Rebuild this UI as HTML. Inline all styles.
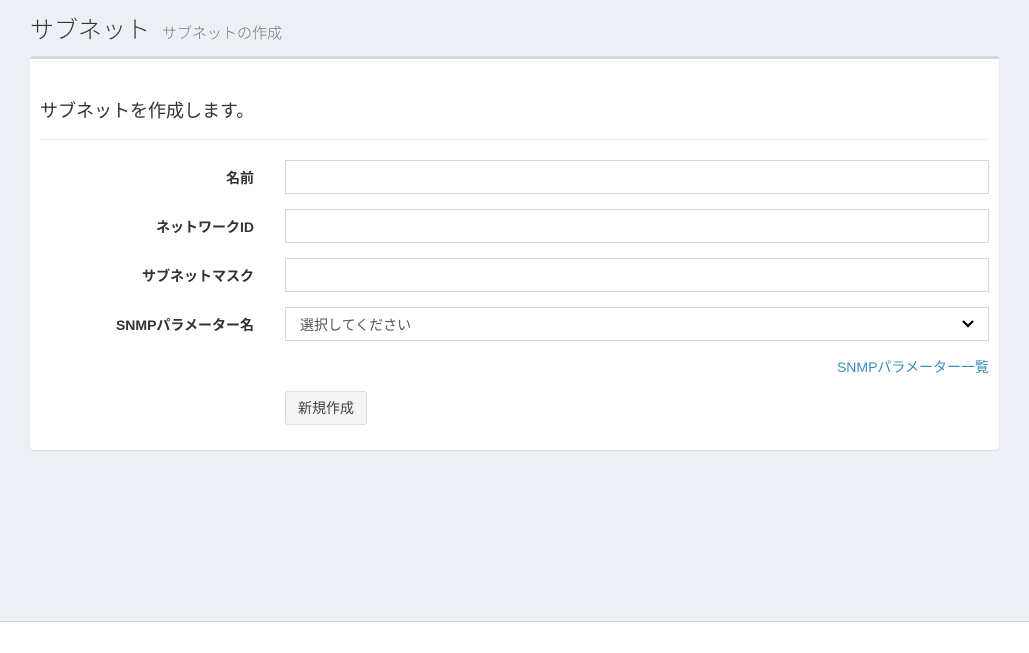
<!DOCTYPE html>
<html><head><meta charset="utf-8"><style>
*{box-sizing:border-box;margin:0;padding:0}
body{width:1029px;height:653px;background:#fff;font-family:"Liberation Sans","Noto Sans CJK JP",sans-serif;color:#333;position:relative;overflow:hidden}
.bg{position:absolute;left:0;top:0;width:1029px;height:622px;background:#ecf0f5;border-bottom:1px solid #d2d6de}
.h1{position:absolute;left:30px;top:10px;font-size:24px;color:#333;font-weight:300}
.h1 small{font-size:15px;color:#777;margin-left:12px}
.box{position:absolute;left:30px;top:56px;width:969px;height:394px;background:#fff;border-top:3px solid #d2d6de;border-radius:3px;box-shadow:0 1px 1px rgba(0,0,0,.1)}
.lead{position:absolute;left:10px;top:38px;font-size:18px}
.hr{position:absolute;left:10px;right:10px;top:80px;border-top:1px solid #eee}
.lbl{position:absolute;right:745px;font-size:14px;font-weight:bold;text-align:right;white-space:nowrap}
.inp{position:absolute;left:255px;width:704px;height:34px;border:1px solid #d2d6de;background:#fff}
.sel{font-size:14px;color:#555;padding:7px 14px}
.chev{position:absolute;right:14px;top:11px}
.link{position:absolute;right:10px;top:298px;font-size:14px;color:#3c8dbc}
.btn{position:absolute;left:255px;top:332px;width:82px;height:34px;border:1px solid #ddd;background:#f4f4f4;border-radius:3px;font-size:14px;color:#444;text-align:center;line-height:32px}
</style></head><body>
<div class="bg"></div>
<div class="h1">サブネット<small>サブネットの作成</small></div>
<div class="box">
<div class="lead">サブネットを作成します。</div>
<div class="hr"></div>
<div class="lbl" style="top:109px">名前</div>
<div class="inp" style="top:101px"></div>
<div class="lbl" style="top:158px">ネットワークID</div>
<div class="inp" style="top:150px"></div>
<div class="lbl" style="top:207px">サブネットマスク</div>
<div class="inp" style="top:199px"></div>
<div class="lbl" style="top:256px">SNMPパラメーター名</div>
<div class="inp sel" style="top:248px">選択してください<svg class="chev" width="12" height="10" viewBox="0 0 12 10"><path d="M1 2l5 5 5-5" stroke="#000" stroke-width="2.2" fill="none"/></svg></div>
<div class="link">SNMPパラメーター一覧</div>
<div class="btn">新規作成</div>
</div>
</body></html>
